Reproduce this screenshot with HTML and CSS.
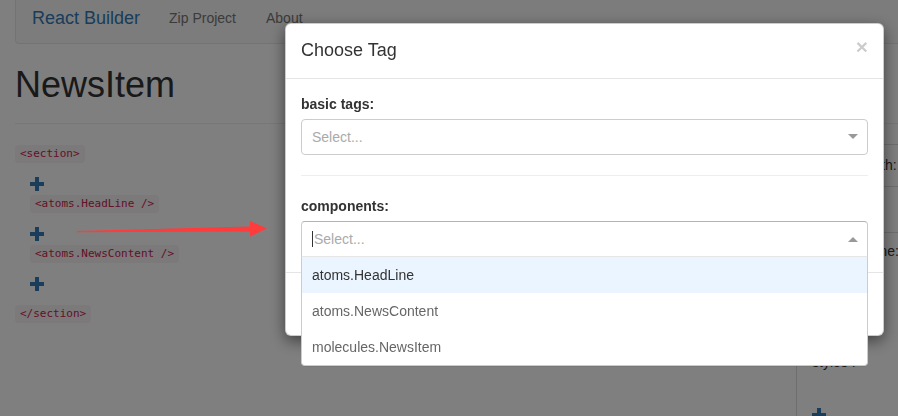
FILE: index.html
```html
<!DOCTYPE html>
<html>
<head>
<meta charset="utf-8">
<title>React Builder</title>
<link rel="stylesheet" href="styles.css">
</head>
<body>
<div class="page">
  <nav class="navbar">
    <a class="brand">React Builder</a>
    <a class="nav-link">Zip Project</a>
    <a class="nav-link">About</a>
  </nav>
  <div class="page-header"><h1>NewsItem</h1></div>
  <div class="workspace">
    <div class="tree">
      <code>&lt;section&gt;</code>
      <div class="children">
        <svg class="plus" viewBox="0 0 14 14"><rect x="0" y="5" width="14" height="4"/><rect x="5" y="0" width="4" height="14"/></svg>
        <code>&lt;atoms.HeadLine /&gt;</code>
        <svg class="plus" viewBox="0 0 14 14"><rect x="0" y="5" width="14" height="4"/><rect x="5" y="0" width="4" height="14"/></svg>
        <code>&lt;atoms.NewsContent /&gt;</code>
        <svg class="plus" viewBox="0 0 14 14"><rect x="0" y="5" width="14" height="4"/><rect x="5" y="0" width="4" height="14"/></svg>
      </div>
      <code>&lt;/section&gt;</code>
    </div>
    <aside class="props">
      <table class="props-table">
        <tr class="row-a"><td>width:</td></tr>
        <tr class="row-b"><td></td></tr>
        <tr class="row-c"><td>name:</td></tr>
      </table>
      <div class="styles-label">styles :</div>
      <svg class="plus" viewBox="0 0 14 14"><rect x="0" y="5" width="14" height="4"/><rect x="5" y="0" width="4" height="14"/></svg>
    </aside>
  </div>
</div>

<div class="backdrop"></div>

<svg class="annotation" viewBox="0 0 300 260" width="300" height="260">
  <polygon points="77,231 250,226.5 250,221 267,228.5 250,236.5 250,231.5 77,232.2"/>
</svg>

<div class="modal">
  <div class="modal-header">
    <h4 class="modal-title">Choose Tag</h4>
    <button class="close">×</button>
  </div>
  <div class="modal-body">
    <div class="form-group">
      <label>basic tags:</label>
      <div class="select">
        <div class="select-control">
          <span class="placeholder">Select...</span>
          <span class="arrow-zone"><span class="arrow arrow-down"></span></span>
        </div>
      </div>
    </div>
    <hr>
    <div class="form-group form-group-last">
      <label>components:</label>
      <div class="select select-open">
        <div class="select-control">
          <span class="text-cursor"></span>
          <span class="placeholder">Select...</span>
          <span class="arrow-zone"><span class="arrow arrow-up"></span></span>
        </div>
        <div class="select-menu">
          <div class="option option-focused">atoms.HeadLine</div>
          <div class="option">atoms.NewsContent</div>
          <div class="option">molecules.NewsItem</div>
        </div>
      </div>
    </div>
  </div>
  <div class="modal-footer"></div>
</div>
</body>
</html>
```

FILE: styles.css
```css
* { box-sizing: border-box; }

html, body {
  margin: 0;
  padding: 0;
  overflow: hidden;
}

body {
  width: 898px;
  height: 416px;
  font-family: "Liberation Sans", Arial, sans-serif;
  font-size: 14px;
  line-height: 20px;
  color: #333;
  background: #fff;
}

.page {
  padding-left: 15px;
}

/* navbar */
.navbar {
  display: flex;
  align-items: flex-start;
  height: 44px;
  margin-right: -10px;
  background: #f8f8f8;
  border: 1px solid #e7e7e7;
  border-top: none;
  border-radius: 0 0 4px 4px;
}

.brand {
  font-size: 18px;
  line-height: 20px;
  color: #337ab7;
  padding: 8px 14px 0 16px;
}

.nav-link {
  font-size: 14px;
  line-height: 20px;
  color: #777;
  padding: 8px 15px 0;
}

/* header */
.page-header {
  padding-top: 21px;
  padding-bottom: 18px;
  border-bottom: 1px solid #eee;
}

.page-header h1 {
  margin: 0;
  font-size: 36px;
  line-height: 40px;
  font-weight: normal;
  color: #333;
}

/* workspace */
.workspace {
  display: flex;
}

.tree {
  flex: 1;
  display: flex;
  flex-direction: column;
  align-items: flex-start;
  padding-top: 21px;
}

.children {
  display: flex;
  flex-direction: column;
  align-items: flex-start;
  padding-left: 15px;
  padding-bottom: 10px;
}

code {
  display: inline-block;
  font-family: "DejaVu Sans Mono", "Liberation Mono", monospace;
  font-size: 11px;
  line-height: 14px;
  padding: 2px 5px;
  color: #c7254e;
  background: #f9f2f4;
  border-radius: 4px;
}

.plus {
  display: block;
  width: 14px;
  height: 14px;
  margin: 14px 0 4px;
  fill: #337ab7;
}

.props {
  width: 102px;
  flex-shrink: 0;
  border-left: 1px solid #ddd;
  padding-left: 15px;
  overflow: hidden;
  white-space: nowrap;
  height: 300px;
}

.props-table {
  margin-top: 20px;
  border-collapse: collapse;
  width: 200px;
}

.props-table td {
  border-top: 1px solid #ddd;
  padding: 10px 0 11px 48px;
}

.props-table .row-b td {
  height: 46px;
  padding: 0;
}

.props-table .row-c td {
  padding: 8px 0 11px 48px;
}

.styles-label {
  margin-top: 80px;
}

.props .plus {
  margin: 36px 0 0;
}

/* backdrop */
.backdrop {
  position: fixed;
  inset: 0;
  background: rgba(0, 0, 0, 0.5);
  z-index: 10;
}

.annotation {
  position: fixed;
  left: 0;
  top: 0;
  z-index: 20;
  fill: #ff3b3b;
}

/* modal */
.modal {
  position: fixed;
  top: 23px;
  left: 285px;
  width: 599px;
  background: #fff;
  border: 1px solid rgba(0, 0, 0, 0.2);
  border-radius: 6px;
  box-shadow: 0 5px 15px rgba(0, 0, 0, 0.5);
  z-index: 30;
}

.modal-header {
  display: flex;
  align-items: flex-start;
  padding: 14px 15px 16px;
  border-bottom: 1px solid #e5e5e5;
}

.modal-title {
  flex: 1;
  margin: 0;
  font-size: 18px;
  line-height: 24px;
  font-weight: normal;
  color: #333;
}

.close {
  background: none;
  border: 0;
  padding: 0;
  margin-top: -2px;
  font-family: "Liberation Sans", Arial, sans-serif;
  font-size: 21px;
  font-weight: bold;
  line-height: 21px;
  color: #000;
  opacity: 0.2;
}

.modal-body {
  padding: 15px;
}

.modal-body label {
  display: block;
  font-weight: bold;
  margin-bottom: 5px;
}

.form-group {
  margin-bottom: 15px;
}

.form-group-last {
  margin-bottom: 0;
}

.modal-body hr {
  margin: 20px 0;
  border: 0;
  border-top: 1px solid #eee;
  height: 0;
}

.select {
  position: relative;
}

.select-control {
  display: flex;
  align-items: center;
  height: 36px;
  padding-left: 10px;
  background: #fff;
  border: 1px solid #ccc;
  border-radius: 4px;
}

.placeholder {
  flex: 1;
  color: #aaa;
}

.arrow-zone {
  display: flex;
  align-items: center;
  padding: 0 9px 0 5px;
}

.arrow {
  width: 0;
  height: 0;
  border-style: solid;
}

.arrow-down {
  border-width: 5px 5px 2.5px;
  border-color: #999 transparent transparent;
}

.arrow-up {
  border-width: 0 5px 5px;
  border-color: transparent transparent #999;
}

.select-open .select-control {
  border-color: #b3b3b3 #ccc #d9d9d9;
  border-radius: 4px 4px 0 0;
}

.text-cursor {
  display: inline-block;
  width: 1px;
  height: 16px;
  background: #333;
  margin-right: 1px;
}

.select-menu {
  position: absolute;
  top: 100%;
  left: 0;
  right: 0;
  margin-top: -1px;
  background: #fff;
  border: 1px solid #ccc;
  border-top-color: #e6e6e6;
  border-radius: 0 0 4px 4px;
  box-shadow: 0 1px 0 rgba(0, 0, 0, 0.06);
  z-index: 1;
}

.option {
  padding: 8px 10px;
  color: #666;
}

.option-focused {
  background: #ebf5ff;
  color: #333;
}

.modal-footer {
  height: 63px;
  border-top: 1px solid #e5e5e5;
}
```
